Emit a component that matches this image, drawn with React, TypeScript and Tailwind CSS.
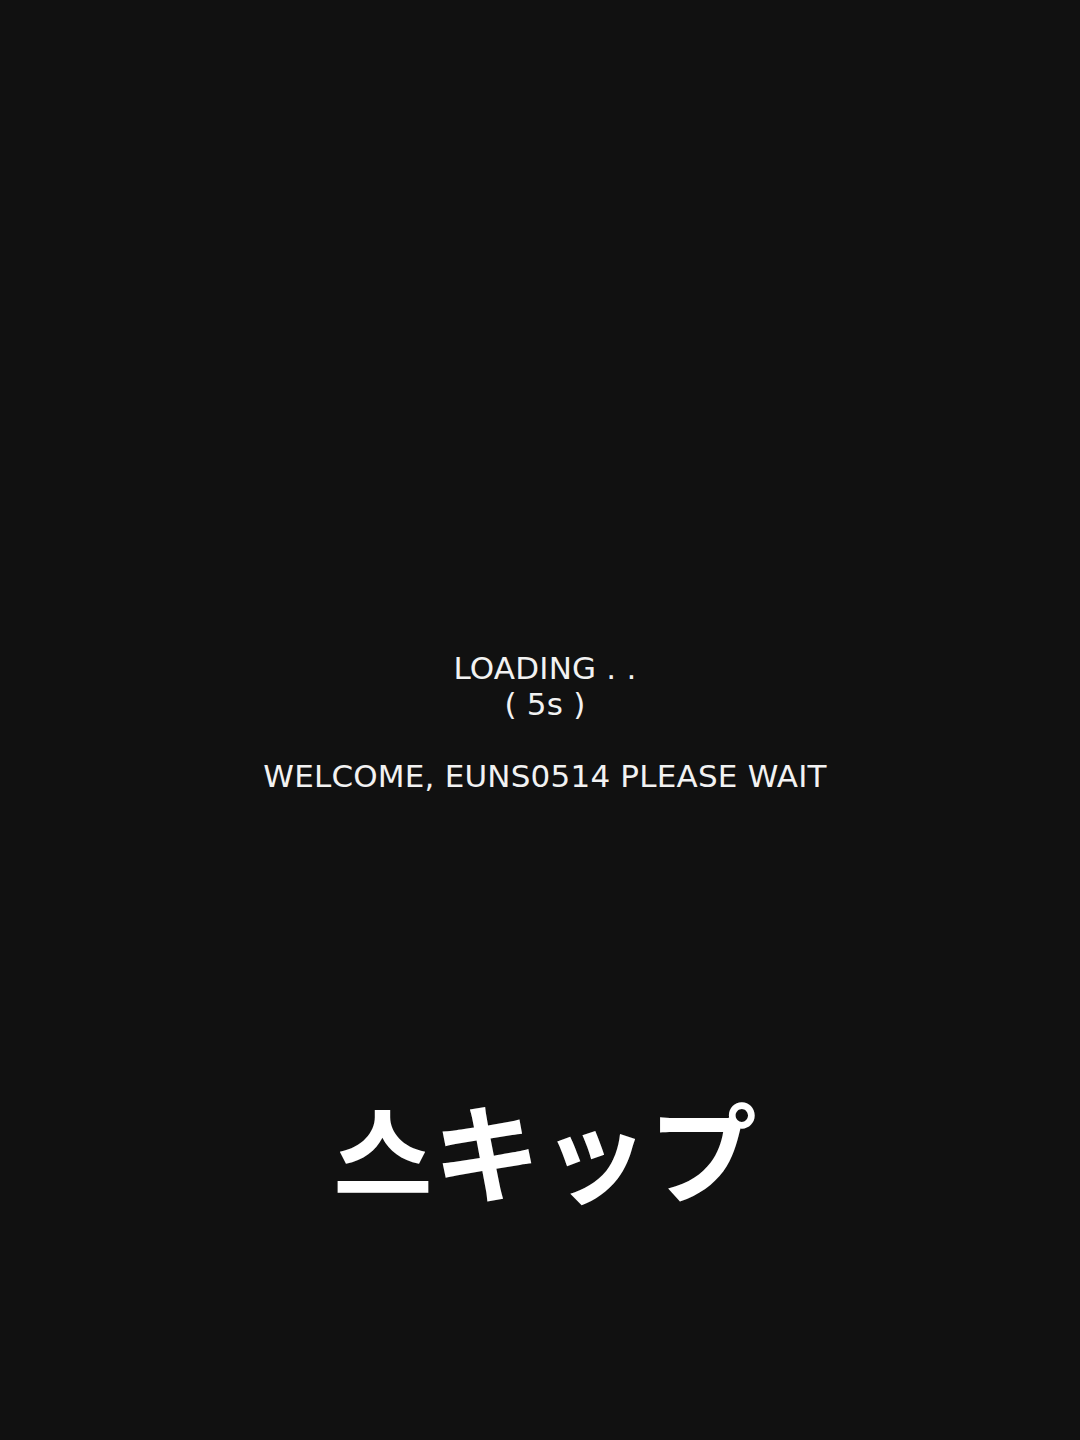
import React from 'react';

export default function App() {
  return (
    <main className="relative h-[1440px] w-full bg-[#111111] flex flex-col items-center justify-center text-white">
      {/* loading message */}
      <div
        className="text-center text-[31px] leading-[36px] tracking-[0.2px] text-[#f2f2f2] pl-[10px] pt-[4px]"
        style={{ fontFamily: '"DejaVu Sans", "Noto Sans", sans-serif' }}
      >
        <p>LOADING . .</p>
        <p>( 5s )</p>
        <p className="mt-[36px]">WELCOME, EUNS0514 PLEASE WAIT</p>
      </div>

      {/* skip */}
      <button
        className="absolute left-0 right-0 top-[1083px] pl-[10px] text-center text-[108px] leading-[130px] font-bold text-white"
        style={{ fontFamily: '"Noto Sans CJK KR", "Noto Sans CJK JP", sans-serif' }}
      >
        스キップ
      </button>
    </main>
  );
}
